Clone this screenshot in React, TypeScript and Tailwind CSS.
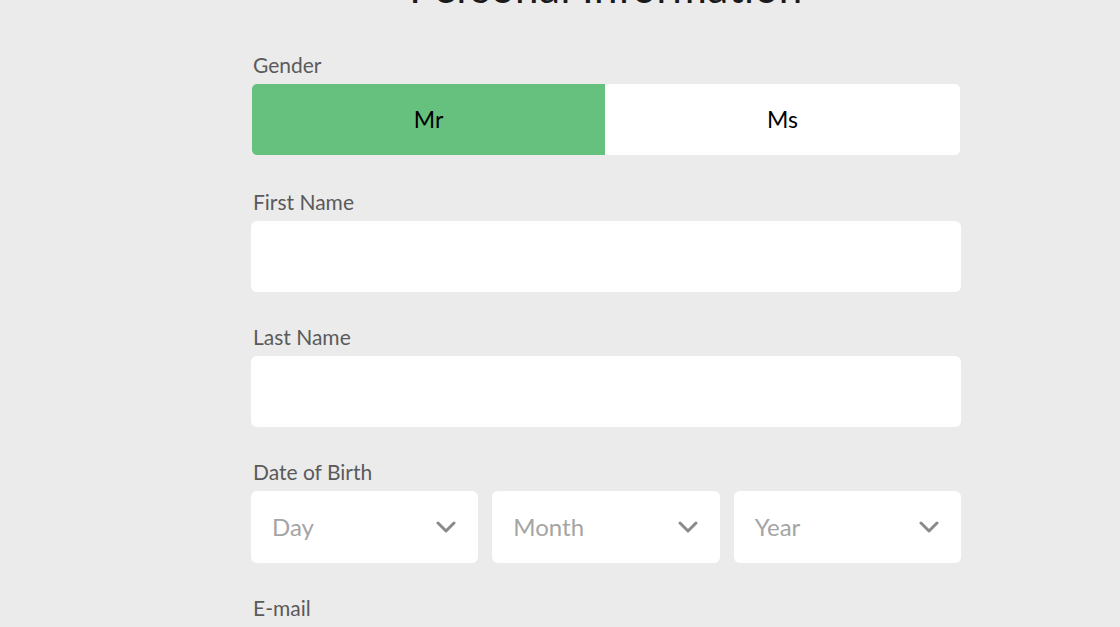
import React from "react";

function Chevron() {
  return (
    <svg width="20" height="12" viewBox="0 0 20 12" fill="none">
      <path d="M2 2 L10 10 L18 2" stroke="#8a8a8a" strokeWidth="3" strokeLinecap="round" strokeLinejoin="round" />
    </svg>
  );
}

function Label({ children }: { children: React.ReactNode }) {
  return <div className="text-[21px] leading-[28px] text-[#5a5a5a] pl-[2px] mb-[5px]">{children}</div>;
}

function Select({ placeholder }: { placeholder: string }) {
  return (
    <div className="flex-1 h-[72px] bg-white rounded-[6px] flex items-center justify-between pl-[21px] pr-[22px]">
      <span className="text-[24px] text-[#a5a5a5]">{placeholder}</span>
      <Chevron />
    </div>
  );
}

export default function App() {
  return (
    <div className="w-[1120px] h-[627px] overflow-hidden bg-[#ebebeb]" style={{ fontFamily: "Lato, 'Open Sans', sans-serif" }}>
      <div className="ml-[251px] w-[710px] flex flex-col">
        <div className="-mt-[34px] h-[42px] text-center text-[42px] leading-[42px] text-[#1a1a1a] tracking-[0.5px]">Personal Information</div>
        <div className="mt-[43px]">
          <Label>Gender</Label>
          <div className="flex h-[71px] rounded-[5px] overflow-hidden ml-[1px] mr-[1px]">
            <div className="w-[353px] bg-[#66c17e] flex items-center justify-center text-[23px] text-black">Mr</div>
            <div className="flex-1 bg-white flex items-center justify-center text-[23px] text-black">Ms</div>
          </div>
        </div>
        <div className="mt-[33px]">
          <Label>First Name</Label>
          <div className="h-[71px] bg-white rounded-[6px]" />
        </div>
        <div className="mt-[31px]">
          <Label>Last Name</Label>
          <div className="h-[71px] bg-white rounded-[6px]" />
        </div>
        <div className="mt-[31px]">
          <Label>Date of Birth</Label>
          <div className="flex gap-[14px]">
            <Select placeholder="Day" />
            <Select placeholder="Month" />
            <Select placeholder="Year" />
          </div>
        </div>
        <div className="mt-[31px]">
          <Label>E-mail</Label>
          <div className="h-[71px] bg-white rounded-[6px]" />
        </div>
      </div>
    </div>
  );
}
